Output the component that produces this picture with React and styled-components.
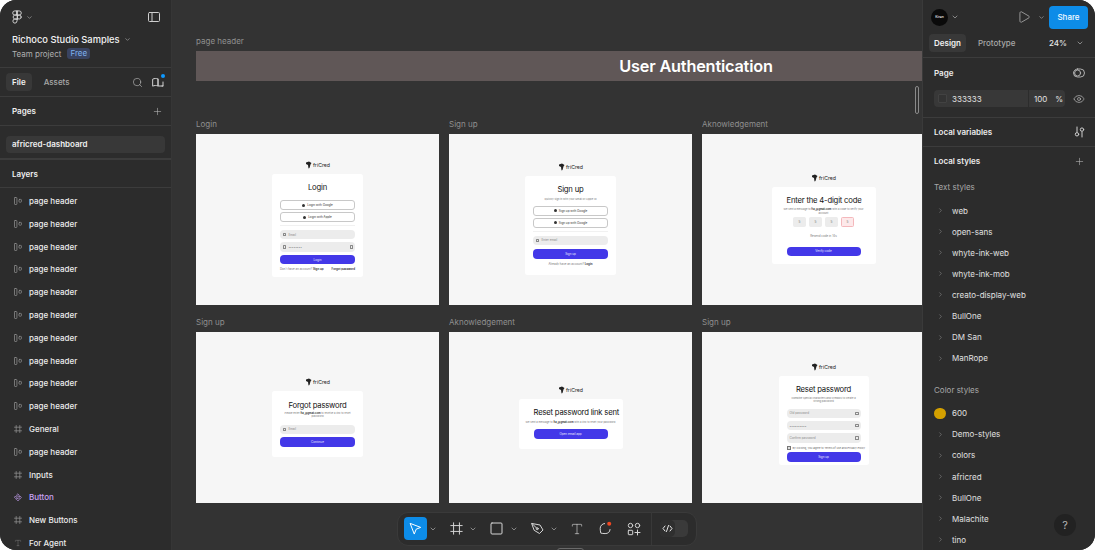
import React from 'react';
import styled, { createGlobalStyle } from 'styled-components';
import { ChevronDown, ChevronRight, Plus, Search, Eye, Play, Type } from 'lucide-react';

const GlobalStyle = createGlobalStyle`
  html, body { margin: 0; padding: 0; background: #fff; }
  * { box-sizing: border-box; }
  body { font-family: Inter, "Liberation Sans", sans-serif; }
`;

const Shell = styled.div`
  display: flex;
  width: 1095px;
  height: 550px;
  overflow: hidden;
  border-radius: 16px;
  background: #333;
  color: #eee;
  font-size: 8px;
  font-weight: 500;
  position: relative;
`;

/* left panel */
const LeftPanel = styled.aside`
  width: 172px;
  flex: none;
  background: #2c2c2c;
  border-right: 1px solid #363636;
  overflow: hidden;
`;
const ProjectHead = styled.div`
  height: 68px;
  padding: 9px 10px 0 12px;
  border-bottom: 1px solid #3c3c3c;
`;
const LogoRow = styled.div`
  display: flex;
  align-items: center;
  height: 16px;
  gap: 4px;
`;
const Spread = styled.div`
  flex: 1;
`;
const ProjectName = styled.div`
  display: flex;
  align-items: center;
  gap: 5px;
  margin-top: 7px;
  height: 14px;
  font-size: 9.3px;
  font-weight: 500;
  color: #f2f2f2;
`;
const ProjectMeta = styled.div`
  display: flex;
  align-items: center;
  gap: 6px;
  height: 13px;
  margin-top: 1px;
  font-size: 8px;
  font-weight: 400;
  color: #b0b0b0;
`;
const FreeBadge = styled.span`
  padding: 0 3px;
  height: 11px;
  line-height: 11px;
  border-radius: 3px;
  background: #394360;
  color: #7fb2f0;
  font-size: 8px;
`;
const TabRow = styled.div`
  display: flex;
  align-items: center;
  height: 29px;
  padding: 0 6px;
  border-bottom: 1px solid #3c3c3c;
  gap: 6px;
`;
const Tab = styled.div`
  padding: 0 ${(p) => p.$pad || 6}px;
  height: 18px;
  line-height: 18px;
  border-radius: 4px;
  background: ${(p) => (p.$active ? '#383838' : 'transparent')};
  color: ${(p) => (p.$active ? '#f2f2f2' : '#a8a8a8')};
  font-size: 8px;
  font-weight: ${(p) => (p.$active ? 600 : 500)};
`;
const BookWrap = styled.span`
  position: relative;
  display: flex;
  margin: 0 1px 0 3.5px;
`;
const BlueDot = styled.span`
  position: absolute;
  top: -2px;
  right: -1px;
  width: 4px;
  height: 4px;
  border-radius: 50%;
  background: #0d99ff;
`;
const SectionHead = styled.div`
  display: flex;
  align-items: center;
  justify-content: space-between;
  height: ${(p) => p.$h || 29}px;
  padding: 0 8px 0 12px;
  font-size: 8px;
  font-weight: 600;
  color: #f0f0f0;
  border-bottom: 1px solid #3c3c3c;
`;
const PageList = styled.div`
  height: 34px;
  padding: 10px 6px 0;
  border-bottom: 2px solid #3c3c3c;
`;
const PageItem = styled.div`
  height: 17px;
  line-height: 17px;
  padding-left: 6px;
  border-radius: 4px;
  background: #383838;
  font-size: 8px;
  font-weight: 600;
  color: #f0f0f0;
`;
const LayerList = styled.div`
  padding-top: 1.6px;
`;
const LayerRow = styled.div`
  display: flex;
  align-items: center;
  height: 22.8px;
  padding-left: 14px;
  gap: 7px;
  font-size: 8px;
  color: ${(p) => (p.$purple ? '#c9a2f5' : '#ededed')};
`;
const LayerIcon = styled.span`
  width: 8px;
  display: flex;
  justify-content: center;
  flex: none;
`;

/* canvas */
const Canvas = styled.main`
  flex: 1;
  min-width: 0;
  padding: 36px 0 0 24px;
  overflow: hidden;
  position: relative;
  background: #333;
`;
const FrameLabel = styled.div`
  height: 10px;
  line-height: 10px;
  margin-bottom: 5px;
  font-size: 8px;
  font-weight: 400;
  color: #8f8f8f;
  white-space: nowrap;
`;
const Banner = styled.div`
  width: 1000px;
  height: 30px;
  background: #605757;
  display: flex;
  align-items: center;
  justify-content: center;
  color: #fff;
  font-size: 16.3px;
  font-weight: 600;
  letter-spacing: -0.2px;
`;
const FrameGrid = styled.div`
  display: grid;
  grid-template-columns: repeat(3, 243px);
  column-gap: 10px;
  row-gap: 12px;
  margin-top: 38px;
`;
const Frame = styled.div`
  height: 171px;
  padding-bottom: ${(p) => p.$pb || 1}px;
  background: #f6f6f6;
  display: flex;
  flex-direction: column;
  align-items: center;
  justify-content: center;
  color: #1a1a1a;
`;
const BrandRow = styled.div`
  display: flex;
  align-items: center;
  gap: 1px;
  height: 8px;
  margin-bottom: 5px;
  font-size: 5.2px;
  font-weight: 400;
  color: #222;
`;
const MiniCard = styled.div`
  width: ${(p) => p.$w}px;
  height: ${(p) => p.$h}px;
  padding: ${(p) => p.$top}px ${(p) => p.$side || 8}px 0;
  background: #fff;
  border-radius: 2.5px;
  display: flex;
  flex-direction: column;
  align-items: stretch;
`;
const MiniTitle = styled.div`
  height: 10px;
  line-height: 10px;
  text-align: center;
  font-size: 7.7px;
  font-weight: 400;
  letter-spacing: -0.2px;
  color: #111;
  white-space: nowrap;
`;
const MiniSub = styled.div`
  margin: ${(p) => p.$mt ?? 0}px -12px 0;
  text-align: center;
  font-size: 2.6px;
  line-height: 3.6px;
  font-weight: 400;
  color: #777;
  white-space: nowrap;
  b { color: #222; font-weight: 600; }
`;
const OutlineBtn = styled.div`
  height: 10px;
  margin-top: ${(p) => p.$mt ?? 2}px;
  border: 0.6px solid #c8c8c8;
  border-radius: 3px;
  display: flex;
  align-items: center;
  justify-content: center;
  gap: 2px;
  font-size: 3px;
  font-weight: 400;
  color: #333;
`;
const Dot = styled.span`
  width: 3px;
  height: 3px;
  border-radius: 50%;
  background: #333;
`;
const Divider = styled.div`
  height: 1px;
  margin-top: 3px;
  background: #f1f1f1;
`;
const FieldBox = styled.div`
  height: 9.4px;
  margin-top: ${(p) => p.$mt ?? 3}px;
  padding: 0 2px 0 3px;
  border-radius: 4px;
  background: #ececec;
  display: flex;
  align-items: center;
  gap: 2px;
  font-size: 3px;
  font-weight: 400;
  color: #888;
`;
const FieldGlyph = styled.span`
  width: 3.4px;
  height: 3.4px;
  flex: none;
  border: 0.5px solid #888;
  border-radius: 0.6px;
  margin-left: ${(p) => (p.$end ? 'auto' : '0')};
`;
const PrimaryBtn = styled.div`
  height: 9.6px;
  margin-top: ${(p) => p.$mt ?? 3}px;
  border-radius: 4px;
  background: #4338e8;
  color: #e8e8ff;
  display: flex;
  align-items: center;
  justify-content: center;
  font-size: 3px;
  font-weight: 400;
`;
const MiniFooter = styled.div`
  display: flex;
  justify-content: ${(p) => (p.$center ? 'center' : 'space-between')};
  gap: 1px;
  margin-top: ${(p) => p.$mt ?? 3}px;
  font-size: 2.9px;
  line-height: 4px;
  font-weight: 400;
  color: #777;
  b { color: #222; font-weight: 600; }
`;
const CodeRow = styled.div`
  display: flex;
  justify-content: center;
  gap: 3px;
  margin-top: 2px;
`;
const CodeBox = styled.div`
  width: 13px;
  height: 9.5px;
  border-radius: 1.5px;
  background: ${(p) => (p.$error ? '#fde9ea' : '#ececec')};
  border: 0.6px solid ${(p) => (p.$error ? '#f4b8bc' : '#ececec')};
  display: flex;
  align-items: center;
  justify-content: center;
  font-size: 3.2px;
  font-weight: 400;
  color: #777;
`;
const CheckLine = styled.div`
  display: flex;
  align-items: center;
  gap: 2px;
  margin-top: 2.5px;
  height: 5px;
  font-size: 2.7px;
  font-weight: 400;
  color: #666;
  white-space: nowrap;
`;
const CheckBox = styled.span`
  width: 4px;
  height: 4px;
  flex: none;
  border: 0.5px solid #777;
  background: #ddd;
`;
const CanvasHandle = styled.div`
  position: absolute;
  left: 743px;
  top: 86px;
  width: 4px;
  height: 28px;
  border: 1px solid #8a8a8a;
  border-radius: 2px;
`;

/* bottom toolbar */
const Toolbar = styled.div`
  position: absolute;
  left: 397px;
  top: 511.5px;
  width: 300px;
  height: 34.5px;
  padding: 0 6px;
  display: flex;
  align-items: center;
  gap: 8px;
  background: #2c2c2c;
  border: 1px solid #3a3a3a;
  border-radius: 11px;
`;
const ToolGroup = styled.div`
  display: flex;
  align-items: center;
  gap: 1.5px;
`;
const ToolBtn = styled.div`
  width: 23px;
  height: 23px;
  display: flex;
  align-items: center;
  justify-content: center;
  border-radius: 4px;
  color: #e0e0e0;
  background: ${(p) => (p.$active ? '#0d8ce8' : 'transparent')};
`;
const SingleTools = styled.div`
  display: flex;
  align-items: center;
  gap: 5.5px;
  margin-left: -1px;
`;
const ToolDivider = styled.div`
  width: 1px;
  height: 33px;
  background: #383838;
  margin-left: -2px;
`;
const CodeToggle = styled.div`
  width: 28px;
  height: 17px;
  border-radius: 5px;
  background: #3a3a3a;
`;
const CodeKnob = styled.div`
  width: 15px;
  height: 17px;
  border-radius: 5px;
  background: #2f2f2f;
  display: flex;
  align-items: center;
  justify-content: center;
  color: #e6e6e6;
`;
const BottomTab = styled.div`
  position: absolute;
  left: 557px;
  top: 548px;
  width: 27px;
  height: 6px;
  border: 1px solid #6a6a6a;
  border-radius: 3px;
`;

/* right panel */
const RightPanel = styled.aside`
  width: 173px;
  flex: none;
  background: #2c2c2c;
  border-left: 1px solid #3a3a3a;
  overflow: hidden;
`;
const TopBar = styled.div`
  display: flex;
  align-items: center;
  height: 34px;
  padding: 0 7px 0 8px;
`;
const Avatar = styled.div`
  width: 17px;
  height: 17px;
  margin-right: 3px;
  border-radius: 50%;
  background: #0a0a0a;
  color: #ddd;
  display: flex;
  align-items: center;
  justify-content: center;
  font-size: 3.4px;
  font-weight: 600;
`;
const ShareBtn = styled.div`
  width: 39px;
  height: 23px;
  border-radius: 4px;
  background: #0d8ce8;
  color: #f4faff;
  display: flex;
  align-items: center;
  justify-content: center;
  font-size: 8px;
  font-weight: 500;
`;
const ChevWrap = styled.span`
  display: flex;
  margin: 0 4px 0 7.5px;
`;
const DesignTabs = styled.div`
  display: flex;
  align-items: flex-start;
  height: 24px;
  padding: 0 11px 0 6px;
  gap: 7px;
  border-bottom: 1px solid #3c3c3c;
`;
const Zoomed = styled.div`
  display: flex;
  align-items: center;
  gap: 9px;
  height: 18px;
  font-size: 8px;
  color: #e6e6e6;
`;
const PageSection = styled.div`
  height: 60px;
  border-bottom: 1px solid #3c3c3c;
`;
const PanelHead = styled.div`
  display: flex;
  align-items: center;
  justify-content: space-between;
  height: ${(p) => p.$h || 29}px;
  padding: 0 10px 0 11px;
  font-size: 8px;
  font-weight: 600;
  color: #ededed;
  border-bottom: ${(p) => (p.$line ? '1px solid #3c3c3c' : 'none')};
`;
const FillRow = styled.div`
  display: flex;
  align-items: center;
  gap: 8px;
  margin-top: 3px;
  padding: 0 10px 0 11px;
`;
const FillInput = styled.div`
  flex: 1;
  height: 17px;
  display: flex;
  align-items: center;
  border-radius: 4px;
  background: #383838;
  font-size: 8px;
  font-weight: 400;
  color: #e2e2e2;
`;
const Swatch = styled.span`
  width: 9px;
  height: 9px;
  margin: 0 5px 0 4px;
  background: #333;
  border: 1px solid #424242;
  border-radius: 1px;
`;
const FillOpacity = styled.span`
  margin-left: auto;
  width: 37px;
  height: 17px;
  border-left: 1px solid #2c2c2c;
  padding: 0 2px 0 5px;
  display: flex;
  align-items: center;
  justify-content: space-between;
`;
const StyleTitle = styled.div`
  height: 20px;
  line-height: 20px;
  margin-top: ${(p) => p.$mt || 0}px;
  margin-bottom: 3px;
  padding-left: 11px;
  font-size: 8px;
  font-weight: 400;
  color: #a8a8a8;
`;
const StyleRow = styled.div`
  display: flex;
  align-items: center;
  height: 21.1px;
  padding-left: 14px;
  font-size: 8px;
  font-weight: 400;
  color: #e0e0e0;
`;
const StyleLead = styled.span`
  width: 15px;
  display: flex;
  flex: none;
  color: #8a8a8a;
`;
const GoldDot = styled.span`
  width: 11.5px;
  height: 11.5px;
  margin-left: -3px;
  border-radius: 50%;
  background: #d4a000;
`;
const HelpBtn = styled.div`
  position: absolute;
  left: 1054px;
  top: 514px;
  width: 22px;
  height: 22px;
  border-radius: 50%;
  background: #222;
  color: #b5b5b5;
  display: flex;
  align-items: center;
  justify-content: center;
  font-size: 11px;
  font-weight: 400;
`;

const Svg = ({ w = 14, h = 14, box = '0 0 14 14', color = '#cfcfcf', sw = 1, children }) => (
  <svg
    width={w}
    height={h}
    viewBox={box}
    fill="none"
    stroke={color}
    strokeWidth={sw}
    strokeLinecap="round"
    strokeLinejoin="round"
  >
    {children}
  </svg>
);

const Chev = ({ size = 8, color = '#b5b5b5' }) => <ChevronDown size={size} color={color} strokeWidth={2} />;

const FigmaLogo = () => (
  <Svg w={10} h={14} box="0 0 10 15" color="#d8d8d8">
    <path d="M5 1H2.6a2.2 2.2 0 0 0 0 4.4H5zM5 1h2.4a2.2 2.2 0 0 1 0 4.4H5zM5 5.4H2.6a2.2 2.2 0 0 0 0 4.3H5zM5 9.7H2.6A2.2 2.2 0 1 0 5 12zV9.7z" />
    <circle cx="7.3" cy="7.55" r="2.2" />
  </Svg>
);
const PanelToggle = () => (
  <Svg>
    <rect x="1.5" y="2.5" width="11" height="9" rx="1" />
    <path d="M5 2.5v9" />
  </Svg>
);
const BookIcon = () => (
  <Svg w={12} h={12} box="0 0 12 12">
    <path d="M1 3c1.5-.7 3.2-.7 5 0v7c-1.8-.7-3.5-.7-5 0zM6 3v7h5V6M11 10h-1" />
  </Svg>
);
const AutoLayoutIcon = () => (
  <Svg w={8} h={8} box="0 0 8 8" color="#8a8a8a" sw={0.8}>
    <rect x="0.5" y="0.5" width="2.4" height="7" rx="0.6" />
    <rect x="5" y="2.4" width="2.4" height="2.8" rx="0.6" />
  </Svg>
);
const FrameIcon = ({ size = 8, color = '#8a8a8a', sw = 0.8 }) => (
  <Svg w={size} h={size} box="0 0 8 8" color={color} sw={sw}>
    <path d="M2.2 0.5v7M5.8 0.5v7M0.5 2.2h7M0.5 5.8h7" />
  </Svg>
);
const ComponentIcon = () => (
  <Svg w={9} h={9} box="0 0 10 10" color="#c9a2f5" sw={0.9}>
    <path d="M5 .8l1.5 1.5L5 3.8 3.5 2.3zM5 6.2l1.5 1.5L5 9.2 3.5 7.7zM2.3 3.5L3.8 5 2.3 6.5.8 5zM7.7 3.5L9.2 5 7.7 6.5 6.2 5z" />
  </Svg>
);
const SettingsSliders = () => (
  <Svg w={11} h={12} box="0 0 11 12">
    <path d="M3 1v5M8 6v5" />
    <circle cx="3" cy="8.3" r="1.7" />
    <circle cx="8" cy="3.6" r="1.7" />
  </Svg>
);
const LibraryRings = () => (
  <Svg w={12} h={10} box="0 0 12 10" color="#bdbdbd" sw={0.9}>
    <rect x="0.5" y="1" width="11" height="8" rx="4" />
    <circle cx="4.6" cy="5" r="3" />
  </Svg>
);
const CursorIcon = () => (
  <Svg w={15} h={15} box="0 0 15 15" color="#fff" sw={1}>
    <path d="M2.5 2.5l10.2 3.9-4.5 1.8-1.8 4.5z" />
  </Svg>
);
const RectIcon = () => (
  <Svg w={13} h={13} box="0 0 13 13" color="#d5d5d5">
    <rect x="1" y="1" width="11" height="11" rx="1" />
  </Svg>
);
const PenIcon = () => (
  <Svg w={15} h={15} box="0 0 15 15" color="#d5d5d5">
    <path d="M2 2.5l8 1.5 3 5-3.5 3.5-5-3zM2 2.5l4.5 4.5" />
    <circle cx="7.2" cy="7.7" r="1" />
  </Svg>
);
const CommentIcon = () => (
  <svg width="15" height="15" viewBox="0 0 15 15" fill="none">
    <path d="M7 2.5a5 5 0 0 0-4.8 5.2c0 1.4.3 2.9.6 4.4 1.3.3 2.7.5 4.3.5a5 5 0 0 0 5-4.5" stroke="#d5d5d5" />
    <circle cx="11.2" cy="2.8" r="2" fill="#f24822" />
  </svg>
);
const ActionsIcon = () => (
  <Svg w={14} h={14} box="0 0 14 14" color="#d5d5d5">
    <circle cx="3.5" cy="3.5" r="2.2" />
    <circle cx="10.5" cy="3.5" r="2.2" />
    <rect x="1.3" y="8.3" width="4.4" height="4.4" rx="0.5" />
    <path d="M10.5 8v5M8 10.5h5" />
  </Svg>
);
const CodeGlyph = () => (
  <Svg w={11} h={9} box="0 0 11 9" color="#e6e6e6">
    <path d="M3 2L1 4.5 3 7M8 2l2 2.5L8 7M6.5 1.5l-2 6" />
  </Svg>
);
const BrandMark = () => (
  <svg width="7" height="8" viewBox="0 0 7 8">
    <path d="M1 1.5L4 .5l2.5 1.5-1 1.5L4.5 7 3.5 7.5 3 4 1 3z" fill="#222" />
  </svg>
);

const Brand = () => (
  <BrandRow>
    <BrandMark />
    friCred
  </BrandRow>
);

const layers = [
  ...Array(10).fill({ name: 'page header', kind: 'auto' }),
  { name: 'General', kind: 'frame' },
  { name: 'page header', kind: 'auto' },
  { name: 'Inputs', kind: 'frame' },
  { name: 'Button', kind: 'component' },
  { name: 'New Buttons', kind: 'frame' },
  { name: 'For Agent', kind: 'text' },
];

const layerIcons = {
  auto: <AutoLayoutIcon />,
  frame: <FrameIcon />,
  component: <ComponentIcon />,
  text: <Type size={8} color="#8a8a8a" strokeWidth={1.2} />,
};

const textStyles = ['web', 'open-sans', 'whyte-ink-web', 'whyte-ink-mob', 'creato-display-web', 'BullOne', 'DM San', 'ManRope'];
const colorStyles = ['Demo-styles', 'colors', 'africred', 'BullOne', 'Malachite', 'tino'];

export default function App() {
  return (
    <>
      <GlobalStyle />
      <Shell>
        <LeftPanel>
          <ProjectHead>
            <LogoRow>
              <FigmaLogo />
              <Chev size={7} />
              <Spread />
              <PanelToggle />
            </LogoRow>
            <ProjectName>
              Richoco Studio Samples
              <Chev size={7} />
            </ProjectName>
            <ProjectMeta>
              Team project
              <FreeBadge>Free</FreeBadge>
            </ProjectMeta>
          </ProjectHead>
          <TabRow>
            <Tab $active>File</Tab>
            <Tab>Assets</Tab>
            <Spread />
            <Search size={11} color="#cfcfcf" strokeWidth={1.2} />
            <BookWrap>
              <BookIcon />
              <BlueDot />
            </BookWrap>
          </TabRow>
          <SectionHead>
            Pages
            <Plus size={11} color="#bdbdbd" strokeWidth={1.2} />
          </SectionHead>
          <PageList>
            <PageItem>africred-dashboard</PageItem>
          </PageList>
          <SectionHead $h={28}>Layers</SectionHead>
          <LayerList>
            {layers.map((layer, i) => (
              <LayerRow key={i} $purple={layer.kind === 'component'}>
                <LayerIcon>{layerIcons[layer.kind]}</LayerIcon>
                {layer.name}
              </LayerRow>
            ))}
          </LayerList>
        </LeftPanel>

        <Canvas>
          <FrameLabel>page header</FrameLabel>
          <Banner>User Authentication</Banner>
          <FrameGrid>
            <div>
              <FrameLabel>Login</FrameLabel>
              <Frame>
                <Brand />
                <MiniCard $w={91} $h={103} $top={9}>
                  <MiniTitle>Login</MiniTitle>
                  <OutlineBtn $mt={7}><Dot />Login with Google</OutlineBtn>
                  <OutlineBtn><Dot />Login with Apple</OutlineBtn>
                  <Divider />
                  <FieldBox $mt={4}><FieldGlyph />Email</FieldBox>
                  <FieldBox><FieldGlyph />••••••••<FieldGlyph $end /></FieldBox>
                  <PrimaryBtn>Login</PrimaryBtn>
                  <MiniFooter>
                    <span>Don't have an account? <b>Sign up</b></span>
                    <b>Forgot password</b>
                  </MiniFooter>
                </MiniCard>
              </Frame>
            </div>
            <div>
              <FrameLabel>Sign up</FrameLabel>
              <Frame>
                <Brand />
                <MiniCard $w={91} $h={99} $top={9}>
                  <MiniTitle>Sign up</MiniTitle>
                  <MiniSub $mt={3}>Quickly sign in with your Gmail or Apple ID</MiniSub>
                  <OutlineBtn $mt={4}><Dot />Sign up with Google</OutlineBtn>
                  <OutlineBtn><Dot />Sign up with Google</OutlineBtn>
                  <Divider />
                  <FieldBox $mt={4}><FieldGlyph />Enter email</FieldBox>
                  <PrimaryBtn $mt={4}>Sign up</PrimaryBtn>
                  <MiniFooter $center $mt={3}>
                    <span>Already have an account? <b>Login</b></span>
                  </MiniFooter>
                </MiniCard>
              </Frame>
            </div>
            <div>
              <FrameLabel>Aknowledgement</FrameLabel>
              <Frame>
                <Brand />
                <MiniCard $w={104} $h={77} $top={9} $side={15}>
                  <MiniTitle>Enter the 4-digit code</MiniTitle>
                  <MiniSub $mt={2}>We sent a message to <b>fta_@gmail.com</b> with a code to verify your</MiniSub>
                  <MiniSub>account</MiniSub>
                  <CodeRow>
                    <CodeBox>5</CodeBox>
                    <CodeBox>5</CodeBox>
                    <CodeBox>5</CodeBox>
                    <CodeBox $error>5</CodeBox>
                  </CodeRow>
                  <MiniFooter $center $mt={7}>Resend code in 14s</MiniFooter>
                  <PrimaryBtn $mt={9}>Verify code</PrimaryBtn>
                </MiniCard>
              </Frame>
            </div>
            <div>
              <FrameLabel>Sign up</FrameLabel>
              <Frame>
                <Brand />
                <MiniCard $w={91} $h={66} $top={10}>
                  <MiniTitle>Forgot password</MiniTitle>
                  <MiniSub $mt={1}>Please enter <b>fta_@gmail.com</b> to receive a link to reset</MiniSub>
                  <MiniSub>password</MiniSub>
                  <FieldBox $mt={6}><FieldGlyph />Email</FieldBox>
                  <PrimaryBtn>Continue</PrimaryBtn>
                </MiniCard>
              </Frame>
            </div>
            <div>
              <FrameLabel>Aknowledgement</FrameLabel>
              <Frame>
                <Brand />
                <MiniCard $w={104} $h={50} $top={9} $side={15}>
                  <MiniTitle>Reset password link sent</MiniTitle>
                  <MiniSub $mt={3}>We sent a message to <b>fta_@gmail.com</b> with a link to reset your password</MiniSub>
                  <PrimaryBtn $mt={5}>Open email app</PrimaryBtn>
                </MiniCard>
              </Frame>
            </div>
            <div>
              <FrameLabel>Sign up</FrameLabel>
              <Frame $pb={8}>
                <Brand />
                <MiniCard $w={90} $h={89} $top={9}>
                  <MiniTitle>Reset password</MiniTitle>
                  <MiniSub $mt={2}>Combine special characters and symbols to create a</MiniSub>
                  <MiniSub>strong password</MiniSub>
                  <FieldBox $mt={5}>Old password<FieldGlyph $end /></FieldBox>
                  <FieldBox>••••••••••<FieldGlyph $end /></FieldBox>
                  <FieldBox>Confirm password<FieldGlyph $end /></FieldBox>
                  <CheckLine><CheckBox />By clicking, you agree to Terms of use and Privacy Policy</CheckLine>
                  <PrimaryBtn $mt={2}>Sign up</PrimaryBtn>
                </MiniCard>
              </Frame>
            </div>
          </FrameGrid>
          <CanvasHandle />
        </Canvas>

        <RightPanel>
          <TopBar>
            <Avatar>Kiran</Avatar>
            <Chev size={8} />
            <Spread />
            <Play size={14} color="#d0d0d0" strokeWidth={1.1} />
            <ChevWrap><Chev size={7} /></ChevWrap>
            <ShareBtn>Share</ShareBtn>
          </TopBar>
          <DesignTabs>
            <Tab $active $pad={5}>Design</Tab>
            <Tab $pad={5}>Prototype</Tab>
            <Spread />
            <Zoomed>24%<Chev size={8} /></Zoomed>
          </DesignTabs>
          <PageSection>
            <PanelHead>
              Page
              <LibraryRings />
            </PanelHead>
            <FillRow>
              <FillInput>
                <Swatch />
                333333
                <FillOpacity>100<span>%</span></FillOpacity>
              </FillInput>
              <Eye size={12} color="#dcdcdc" strokeWidth={1.1} />
            </FillRow>
          </PageSection>
          <PanelHead $line>
            Local variables
            <SettingsSliders />
          </PanelHead>
          <PanelHead $h={28}>
            Local styles
            <Plus size={11} color="#bdbdbd" strokeWidth={1.2} />
          </PanelHead>
          <StyleTitle $mt={2}>Text styles</StyleTitle>
          {textStyles.map((name) => (
            <StyleRow key={name}>
              <StyleLead><ChevronRight size={7} strokeWidth={2} /></StyleLead>
              {name}
            </StyleRow>
          ))}
          <StyleTitle $mt={11}>Color styles</StyleTitle>
          <StyleRow>
            <StyleLead><GoldDot /></StyleLead>
            600
          </StyleRow>
          {colorStyles.map((name) => (
            <StyleRow key={name}>
              <StyleLead><ChevronRight size={7} strokeWidth={2} /></StyleLead>
              {name}
            </StyleRow>
          ))}
        </RightPanel>

        <Toolbar>
          <ToolGroup>
            <ToolBtn $active><CursorIcon /></ToolBtn>
            <Chev size={8} />
          </ToolGroup>
          <ToolGroup>
            <ToolBtn><FrameIcon size={13} color="#d5d5d5" sw={0.6} /></ToolBtn>
            <Chev size={8} />
          </ToolGroup>
          <ToolGroup>
            <ToolBtn><RectIcon /></ToolBtn>
            <Chev size={8} />
          </ToolGroup>
          <ToolGroup>
            <ToolBtn><PenIcon /></ToolBtn>
            <Chev size={8} />
          </ToolGroup>
          <SingleTools>
            <ToolBtn><Type size={14} color="#d5d5d5" strokeWidth={1.1} /></ToolBtn>
            <ToolBtn><CommentIcon /></ToolBtn>
            <ToolBtn><ActionsIcon /></ToolBtn>
          </SingleTools>
          <ToolDivider />
          <CodeToggle>
            <CodeKnob><CodeGlyph /></CodeKnob>
          </CodeToggle>
        </Toolbar>
        <BottomTab />
        <HelpBtn>?</HelpBtn>
      </Shell>
    </>
  );
}
